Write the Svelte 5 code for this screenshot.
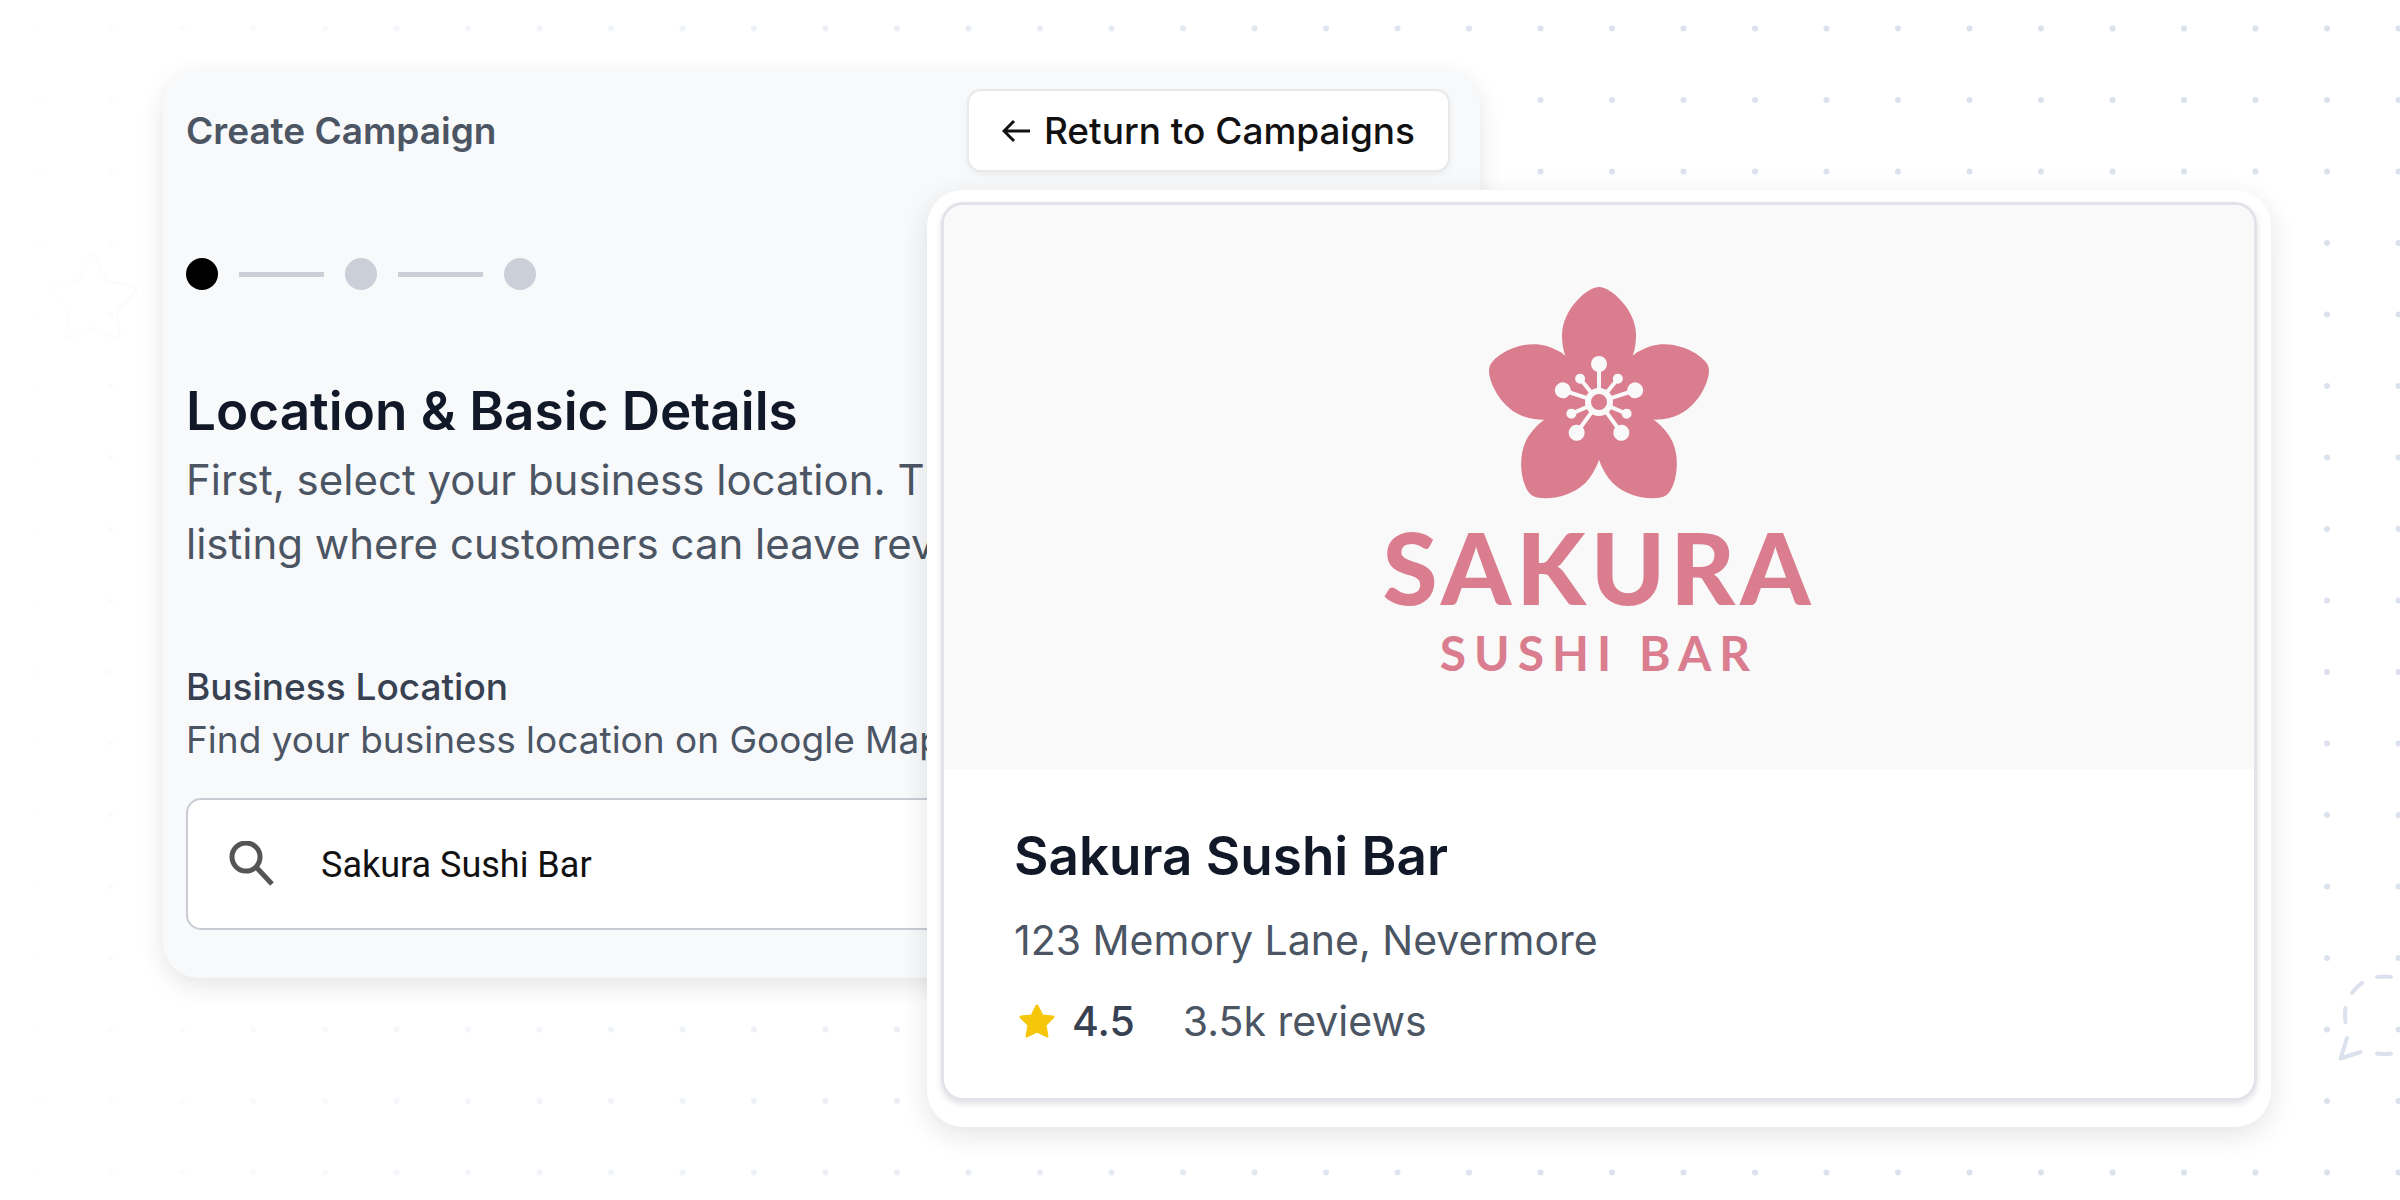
<script lang="ts">
  const steps = ['current', 'upcoming', 'upcoming'];
  const petals = [0, 72, 144, 216, 288];
  const shortStamens = [-113, -39, 39, 113];
  const business = {
    name: 'Sakura Sushi Bar',
    address: '123 Memory Lane, Nevermore',
    rating: '4.5',
    reviews: '3.5k reviews',
  };
  let query = $state('Sakura Sushi Bar');
</script>

<main class="stage">
  <!-- Dot grid, fading out towards the left edge -->
  <svg class="backdrop" aria-hidden="true">
    <defs>
      <pattern id="dots" width="143" height="143" patternUnits="userSpaceOnUse">
        <g fill="#dbe2ed">
          <circle cx="39" cy="28.5" r="3" />
          <circle cx="110.5" cy="28.5" r="3" />
          <circle cx="39" cy="100" r="3" />
          <circle cx="110.5" cy="100" r="3" />
        </g>
      </pattern>
      <linearGradient id="fade">
        <stop offset="0" stop-color="#fff" />
        <stop offset="0.04" stop-color="#fff" stop-opacity="0.92" />
        <stop offset="0.65" stop-color="#fff" stop-opacity="0" />
      </linearGradient>
    </defs>
    <rect width="100%" height="100%" fill="url(#dots)" />
    <path
      d="M90 257q3-5 6 0l9 20q2 4 6 5l22 4q5 2 2 6l-15 15q-3 3-3 7l3 20q0 6-6 4l-17-9q-4-2-8 0l-17 9q-6 2-6-4l3-20q0-4-3-7l-15-15q-3-4 2-6l22-4q4-1 6-5z"
      fill="none"
      stroke="#dbe2ed"
      stroke-width="3"
    />
    <rect width="100%" height="100%" fill="url(#fade)" />
  </svg>
  <svg class="bubble" viewBox="0 0 64 92" aria-hidden="true">
    <g fill="none" stroke="#dbe2ed" stroke-width="4" stroke-linecap="round" stroke-linejoin="round">
      <path d="M41 7q8-1 14 0" />
      <path d="M16 23q4-6 10-10" />
      <path d="M9.500 38q-1 7 0 14" />
      <path d="M11 68 4.500 88.500 24.500 82" />
      <path d="M41 83.500q8 1 14 0" />
    </g>
  </svg>

  <section class="campaign">
    <header>
      <span class="crumb">Create Campaign</span>
      <button type="button">
        <svg width="30" height="24" viewBox="0 0 30 24" aria-hidden="true">
          <path d="M28 12H2M12 2 2 12l10 10" />
        </svg>
        Return to Campaigns
      </button>
    </header>

    <div class="steps">
      {#each steps as step, i}
        {#if i > 0}<span class="line"></span>{/if}
        <span class="dot" class:current={step === 'current'}></span>
      {/each}
    </div>

    <h1>Location &amp; Basic Details</h1>
    <p class="lead">
      First, select your business location. This is the<br />listing where customers can leave reviews.
    </p>

    <label for="location">Business Location</label>
    <p class="hint">Find your business location on Google Maps</p>
    <div class="search">
      <svg width="46" height="46" viewBox="0 0 46 46" aria-hidden="true">
        <circle cx="17" cy="16" r="14" />
        <path d="m27 26 16 17" />
      </svg>
      <input id="location" type="text" bind:value={query} />
    </div>
  </section>

  <article class="listing">
    <div class="card">
      <div class="logo">
        <svg width="220" height="210" viewBox="-110 -115 220 210" aria-hidden="true">
          {#each petals as angle}
            <path
              transform="rotate({angle})"
              fill="#da7d8f"
              d="M0-115C12-115 37-92 37-67C37-60 36-53 34-47L14 2H-14L-34-47C-36-53-37-60-37-67C-37-92-12-115 0-115Z"
            />
          {/each}
          <g fill="#f9f9f9" stroke="#f9f9f9">
            {#each petals as angle}
              <g transform="rotate({angle})">
                <path d="M0-10V-38" stroke-width="4" />
                <circle cy="-38" r="8" stroke="none" />
              </g>
            {/each}
            {#each shortStamens as angle}
              <g transform="rotate({angle})">
                <path d="M0-12V-30" stroke-width="4" />
                <circle cy="-30" r="5" stroke="none" />
              </g>
            {/each}
          </g>
          <circle r="11" fill="#da7d8f" stroke="#f9f9f9" stroke-width="6" />
        </svg>
        <span class="brand">SAKURA</span>
        <span class="kind">SUSHI BAR</span>
      </div>
      <div class="info">
        <h2>{business.name}</h2>
        <p class="address">{business.address}</p>
        <p class="meta">
          <svg width="38" height="36" viewBox="0 0 38 36" aria-hidden="true">
            <path d="M19 3 24 13 35 14 27 22 29 33 19 28 9 33 11 22 3 14 14 13Z" />
          </svg>
          <span class="rating">{business.rating}</span>
          <span>{business.reviews}</span>
        </p>
      </div>
    </div>
  </article>
</main>

<style>
  :global(body) {
    margin: 0;
    background: #fff;
  }

  .stage {
    position: relative;
    box-sizing: border-box;
    min-height: 100vh;
    padding: 69px 129px 70px 163px;
    display: grid;
    grid-template-columns: 764px 553px 1fr;
    align-items: start;
    overflow: hidden;
    font-family: Inter, 'Liberation Sans', sans-serif;
    color: #4b5563;
  }

  .backdrop {
    position: absolute;
    inset: 0;
    width: 100%;
    height: 100%;
  }

  .bubble {
    position: absolute;
    right: 0;
    bottom: 138px;
    width: 64px;
    height: 92px;
  }

  .campaign {
    position: relative;
    grid-area: 1 / 1 / 2 / 3;
    box-sizing: border-box;
    padding: 20px 30px 48px 23px;
    border-radius: 36px;
    background: #f8f9fb;
    box-shadow: 0 8px 24px rgb(0 0 0 / 10%);
  }

  header {
    display: flex;
    align-items: center;
    justify-content: space-between;
  }

  .crumb {
    font-size: 37px;
    font-weight: 600;
    line-height: 53px;
  }

  button {
    display: flex;
    align-items: center;
    gap: 12px;
    padding: 13px 33px;
    border: 2px solid #e9e9ea;
    border-radius: 14px;
    background: #fff;
    box-shadow: 0 3px 6px rgb(0 0 0 / 5%);
    font: 500 37px/53px Inter, 'Liberation Sans', sans-serif;
    color: #111;
  }

  button svg {
    fill: none;
    stroke: currentColor;
    stroke-width: 3;
  }

  .steps {
    display: flex;
    align-items: center;
    gap: 21px;
    margin: 86px 0 84px;
  }

  .dot {
    width: 32px;
    height: 32px;
    border-radius: 50%;
    background: #cacfd8;
  }

  .dot.current {
    background: #000;
  }

  .line {
    width: 85px;
    height: 5px;
    background: #cacfd8;
  }

  h1,
  h2,
  p {
    margin: 0;
  }

  h1,
  h2 {
    font-size: 53px;
    font-weight: 600;
    line-height: 74px;
    color: #111827;
  }

  .lead {
    font-size: 42px;
    line-height: 64px;
    white-space: nowrap;
  }

  label {
    display: block;
    margin-top: 84px;
    font-size: 37px;
    font-weight: 500;
    line-height: 53px;
    color: #374151;
  }

  .hint {
    font-size: 37px;
    line-height: 53px;
  }

  .search {
    display: flex;
    align-items: center;
    gap: 46px;
    box-sizing: border-box;
    height: 132px;
    margin-top: 32px;
    padding: 0 41px;
    border: 2px solid #c9ccd5;
    border-radius: 15px;
    background: #fff;
  }

  .search svg {
    fill: none;
    stroke: #555;
    stroke-width: 5;
  }

  .search input {
    flex: 1;
    min-width: 0;
    padding: 2px 0 0;
    border: 0;
    outline: 0;
    background: none;
    font: 400 36px/53px Roboto, 'Liberation Sans', sans-serif;
    color: #111;
  }

  .listing {
    position: relative;
    grid-area: 1 / 2 / 2 / 4;
    margin-top: 121px;
    padding: 12px 14px 26px;
    border-radius: 36px;
    background: #fff;
    box-shadow: 0 8px 28px rgb(0 0 0 / 11%);
  }

  .card {
    border: 3px solid #e2e3e8;
    border-radius: 22px;
    overflow: hidden;
    box-shadow: 0 3px 6px rgb(0 0 0 / 12%);
  }

  .logo {
    display: flex;
    flex-direction: column;
    align-items: center;
    padding: 82px 0 90px;
    background: #f9f9f9;
    font-family: Lato, 'Liberation Sans', sans-serif;
    color: #da7d8f;
  }

  .logo svg {
    overflow: visible;
  }

  .brand {
    margin-top: 9px;
    font-size: 100px;
    font-weight: 900;
    line-height: 120px;
    letter-spacing: 5px;
  }

  .kind {
    font-size: 48px;
    font-weight: 700;
    line-height: 53px;
    letter-spacing: 8px;
  }

  .info {
    padding: 50px 70px 48px;
  }

  .address,
  .meta {
    font-size: 41px;
    line-height: 58px;
  }

  .address {
    margin-top: 18px;
  }

  .meta {
    display: flex;
    align-items: center;
    margin-top: 23px;
  }

  .meta svg {
    margin: 0 16px 0 4px;
    fill: #f5c60a;
    stroke: #f5c60a;
    stroke-width: 3;
    stroke-linejoin: round;
  }

  .rating {
    margin-right: 48px;
    font-weight: 500;
    color: #374151;
  }
</style>
